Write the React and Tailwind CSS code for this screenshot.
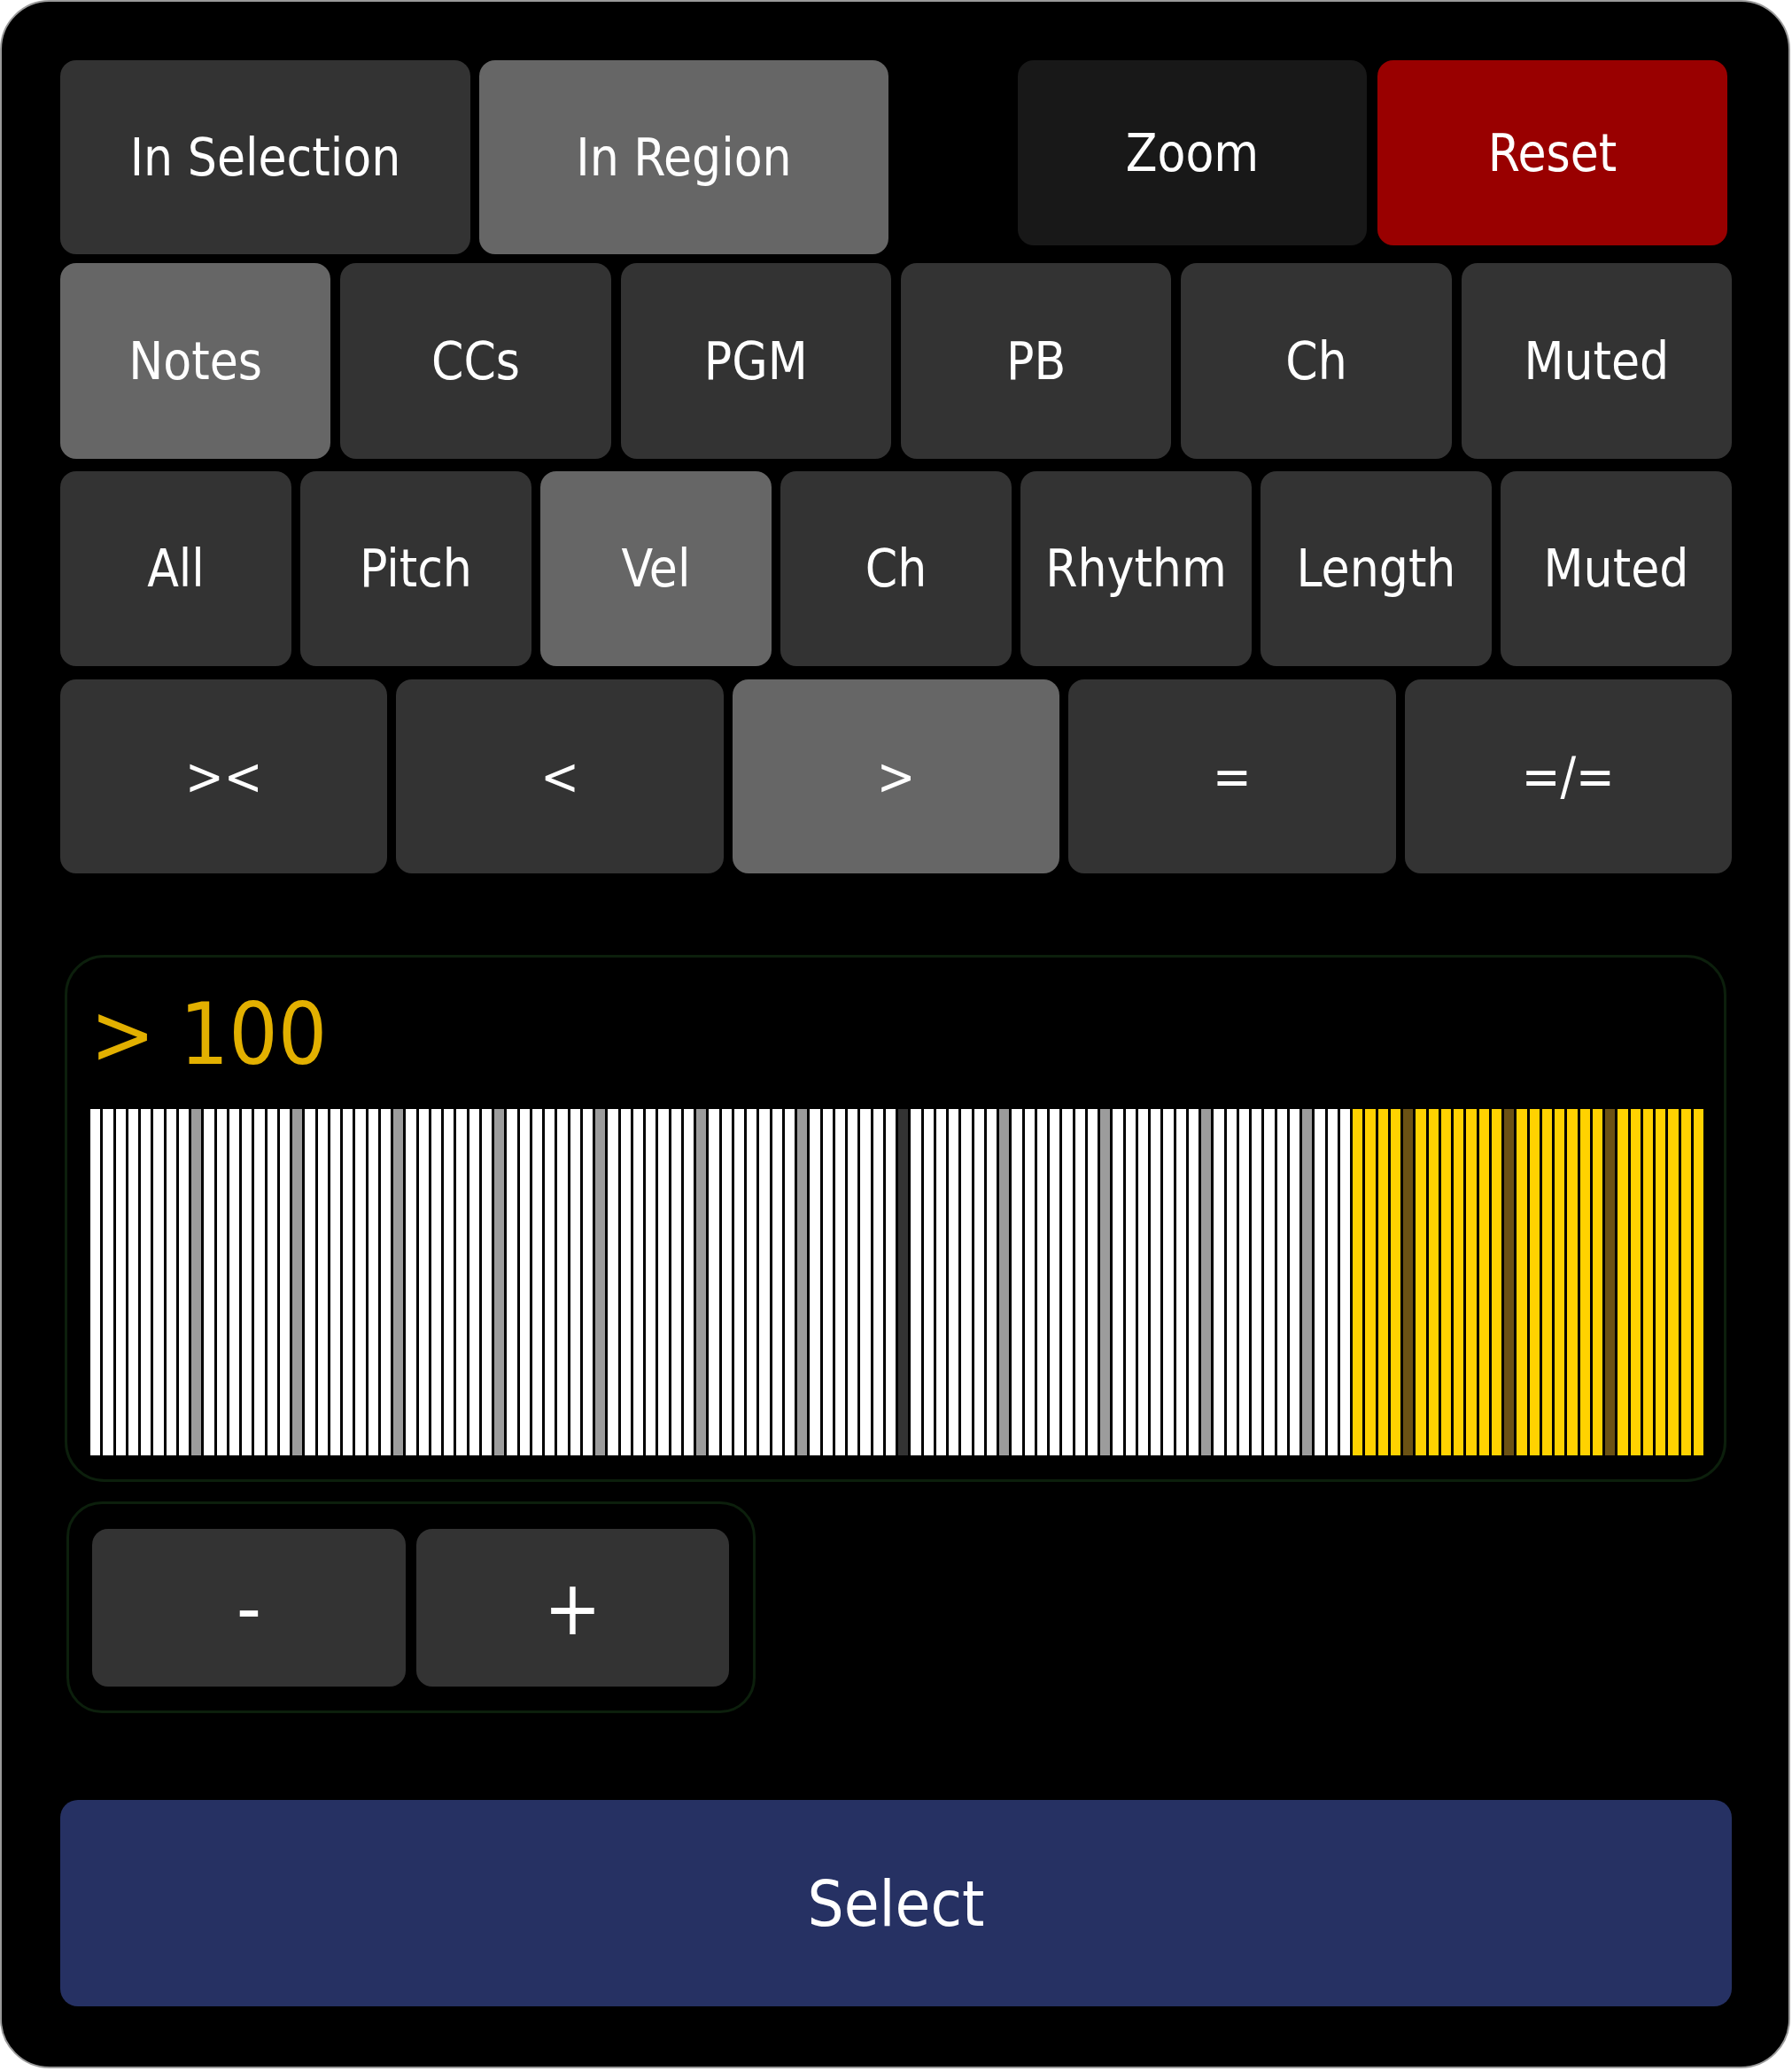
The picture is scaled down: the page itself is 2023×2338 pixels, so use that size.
import React from 'react';

const FONT = "font-['DejaVu_Sans_Condensed','DejaVu_Sans',sans-serif] font-stretch-condensed";

const Btn = ({ label, active, className = '' }) => (
  <div
    className={`flex items-center justify-center rounded-[18px] text-white text-[58px] leading-none ${
      active ? 'bg-[#666666]' : 'bg-[#333333]'
    } ${className}`}
  >
    {label}
  </div>
);

const typeRow = [
  { label: 'Notes', active: true },
  { label: 'CCs' },
  { label: 'PGM' },
  { label: 'PB' },
  { label: 'Ch' },
  { label: 'Muted' },
];

const fieldRow = [
  { label: 'All' },
  { label: 'Pitch' },
  { label: 'Vel', active: true },
  { label: 'Ch' },
  { label: 'Rhythm' },
  { label: 'Length' },
  { label: 'Muted' },
];

const opRow = [
  { label: '><' },
  { label: '<' },
  { label: '>', active: true },
  { label: '=' },
  { label: '=/=' },
];

// velocity 0..127, everything above the threshold is highlighted
const threshold = 100;

const barClass = (i) => {
  const on = i >= threshold;
  if (i === 64) return 'bg-[#333333]';
  if (i % 8 === 0 && i > 0) return on ? 'bg-[#6b5214]' : 'bg-[#9c9c9c]';
  return on ? 'bg-[#ffd200]' : 'bg-white';
};

export default function App() {
  const bars = Array.from({ length: 128 }, (_, i) => i);

  return (
    <div className={`w-[2023px] h-[2338px] bg-white ${FONT}`}>
      <div className="w-[2021px] h-[2335px] rounded-[56px] border-2 border-[#9a9a9a] bg-black pl-[66px] pr-[64px] pt-[66px]">
        {/* scope + reset */}
        <div className="flex justify-between">
          <div className="flex gap-[10px] h-[219px]">
            <Btn label="In Selection" className="w-[463px]" />
            <Btn label="In Region" active className="w-[462px]" />
          </div>
          <div className="flex gap-[12px] h-[209px] mr-[5px]">
            <div className="w-[394px] flex items-center justify-center rounded-[18px] bg-[#181818] text-white text-[58px] leading-none">
              Zoom
            </div>
            <div className="w-[395px] flex items-center justify-center rounded-[18px] bg-[#990000] text-white text-[58px] leading-none">
              Reset
            </div>
          </div>
        </div>

        <div className="mt-[10px] h-[221px] grid grid-cols-6 gap-[11px]">
          {typeRow.map((b) => (
            <Btn key={b.label} {...b} />
          ))}
        </div>

        <div className="mt-[14px] h-[220px] grid grid-cols-7 gap-[10px]">
          {fieldRow.map((b, i) => (
            <Btn key={i} {...b} />
          ))}
        </div>

        <div className="mt-[15px] h-[219px] grid grid-cols-5 gap-[10px]">
          {opRow.map((b) => (
            <Btn key={b.label} {...b} />
          ))}
        </div>

        {/* condition value + velocity strip */}
        <div className="mt-[92px] ml-[5px] w-[1876px] rounded-[45px] border-[3px] border-[#0c1f0c] pl-[26px] pr-[23px] pt-[38px] pb-[27px]">
          <div className="text-[97px] leading-none text-[#e2b000] whitespace-pre">{'> 100'}</div>
          <div className="mt-[36px] h-[391px] flex gap-[3px]">
            {bars.map((i) => (
              <div key={i} className={`flex-1 ${barClass(i)}`} />
            ))}
          </div>
        </div>

        <div className="mt-[22px] ml-[7px] w-[778px] rounded-[40px] border-[3px] border-[#0c1f0c] pl-[26px] pr-[27px] pt-[28px] pb-[27px] flex gap-[12px]">
          <div className="w-[354px] h-[178px] flex items-center justify-center rounded-[18px] bg-[#333333] text-white text-[86px] leading-none">
            -
          </div>
          <div className="w-[353px] h-[178px] flex items-center justify-center rounded-[18px] bg-[#333333] text-white text-[86px] leading-none">
            +
          </div>
        </div>

        <div className="mt-[98px] h-[233px] flex items-center justify-center rounded-[20px] bg-[#263163] text-white text-[72px] leading-none">
          Select
        </div>
      </div>
    </div>
  );
}
